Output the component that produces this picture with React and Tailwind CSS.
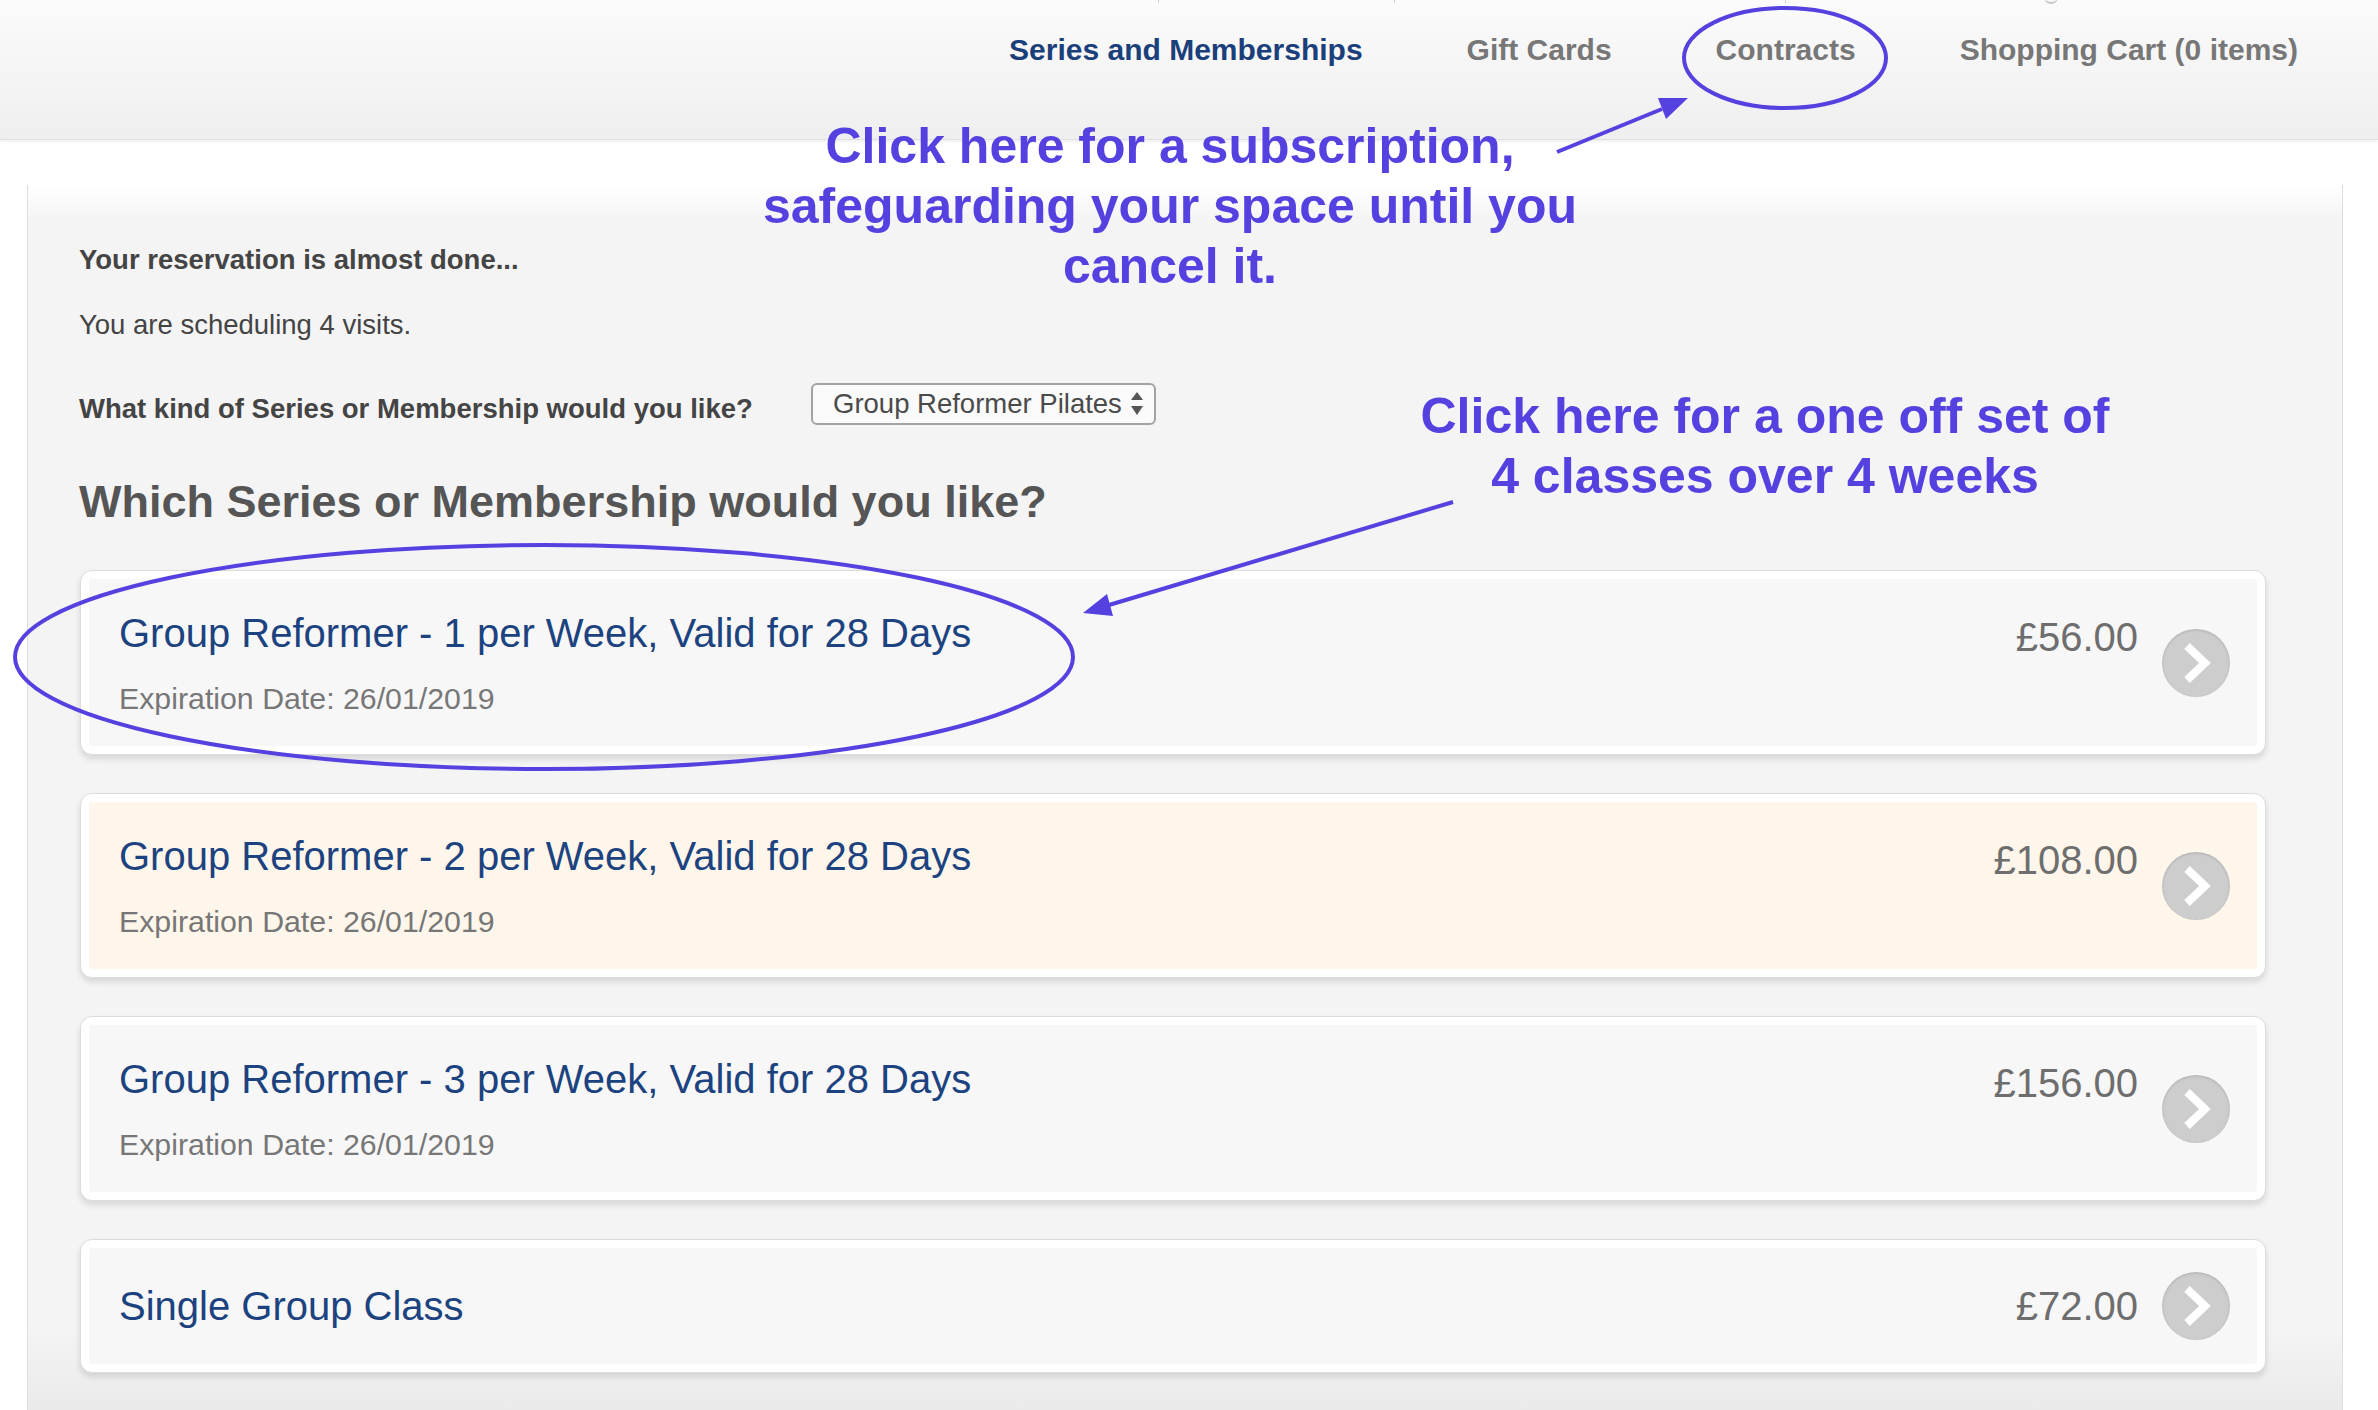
import React from "react";

const plans = [
  { title: "Group Reformer - 1 per Week, Valid for 28 Days", exp: "26/01/2019", price: "£56.00" },
  { title: "Group Reformer - 2 per Week, Valid for 28 Days", exp: "26/01/2019", price: "£108.00", hot: true },
  { title: "Group Reformer - 3 per Week, Valid for 28 Days", exp: "26/01/2019", price: "£156.00" },
  { title: "Single Group Class", price: "£72.00" },
];

const navItems = ["Series and Memberships", "Gift Cards", "Contracts", "Shopping Cart (0 items)"];

const GoButton = () => (
  <div className="flex h-[68px] w-[68px] shrink-0 items-center justify-center rounded-full bg-[#cdcdcd] shadow-[inset_0_1px_3px_rgba(0,0,0,0.15)]">
    <svg width="68" height="68" viewBox="0 0 68 68">
      <polyline points="25,17 43,34 25,51" fill="none" stroke="#ffffff" strokeWidth="8" />
    </svg>
  </div>
);

const PlanCard = ({ plan }) => (
  <div className="rounded-[12px] border border-[#dcdcdc] bg-white p-[8px] shadow-[0_4px_6px_rgba(0,0,0,0.12)]">
    <div
      className={`flex justify-between rounded-[3px] pl-[30px] pr-[27px] ${
        plan.exp ? "pt-[30px] pb-[29px]" : "items-center py-[24px]"
      } ${plan.hot ? "bg-[#fef6ea]" : "bg-[#f7f7f7]"}`}
    >
      <div>
        <div className="text-[40px] leading-[48px] text-[#1c4380]">{plan.title}</div>
        {plan.exp && (
          <div className="mt-[24px] text-[30.3px] leading-[36px] text-[#777777]">
            Expiration Date: {plan.exp}
          </div>
        )}
      </div>
      <div className="flex items-center gap-[24px]">
        <div className={`text-[40px] leading-[48px] text-[#6e6e6e] ${plan.exp ? "mt-[4px] self-start" : ""}`}>
          {plan.price}
        </div>
        <GoButton />
      </div>
    </div>
  </div>
);

const App = () => {
  return (
    <div className="relative flex h-[1410px] flex-col overflow-hidden bg-white font-['Liberation_Sans',Arial,sans-serif]">
      {/* Top bar */}
      <div className="relative h-[140px] shrink-0 border-b border-[#e0e0e0] bg-linear-to-b from-[#fbfbfb] to-[#efefef] shadow-[0_2px_3px_rgba(0,0,0,0.06)]">
        <div className="absolute left-[1158px] top-0 h-[3px] w-px bg-[#d0d0d0]"></div>
        <div className="absolute left-[1394px] top-0 h-[3px] w-px bg-[#d0d0d0]"></div>
        <div className="absolute left-[1785px] top-0 h-[3px] w-px bg-[#d0d0d0]"></div>
        <div className="absolute left-[2044px] top-[-4px] h-[8px] w-[14px] rounded-b-full border-b-2 border-[#c8c8c8]"></div>
        <nav className="flex justify-end gap-[104px] pr-[80px] pt-[33px] text-[30px] font-bold leading-[34px]">
          {navItems.map((item, i) => (
            <span key={item} className={i === 0 ? "text-[#1b3f7b]" : "text-[#777777]"}>
              {item}
            </span>
          ))}
        </nav>
      </div>

      {/* Booking panel */}
      <div className="ml-[27px] mr-[35px] mt-[45px] flex-1 border-x border-[#dddddd] bg-[linear-gradient(to_bottom,#ffffff_0px,#f4f4f4_35px,#f4f4f4_calc(100%-80px),#eaeaea_100%)] pl-[51px] pr-[76px] pt-[59px]">
        <div className="text-[27.5px] font-bold leading-[32px] text-[#444444]">Your reservation is almost done...</div>
        <div className="mt-[33px] text-[27.5px] leading-[32px] text-[#444444]">You are scheduling 4 visits.</div>

        <div className="mt-[42px] flex items-end">
          <div className="w-[732px] text-[27.5px] font-bold leading-[32px] text-[#444444]">
            What kind of Series or Membership would you like?
          </div>
          <div className="flex h-[42px] w-[345px] items-center justify-between rounded-[6px] border-2 border-[#a3a3a3] bg-[#fafafa] pl-[20px] pr-[11px]">
            <span className="text-[27.5px] leading-[32px] text-[#4a4a4a]">Group Reformer Pilates</span>
            <svg width="12" height="24" viewBox="0 0 12 24">
              <polygon points="0,8 6,0 12,8" fill="#555555" />
              <polygon points="0,14 12,14 6,23" fill="#555555" />
            </svg>
          </div>
        </div>

        <h2 className="mt-[51px] text-[45px] font-bold leading-[52px] text-[#555555]">
          Which Series or Membership would you like?
        </h2>

        <div className="mt-[42px] ml-px flex flex-col gap-[38px]">
          {plans.map((plan) => (
            <PlanCard key={plan.title} plan={plan} />
          ))}
        </div>
      </div>

      {/* Annotations */}
      <div className="absolute left-[720px] top-[116px] w-[900px] text-center text-[50px] font-bold leading-[60px] text-[#5541e0]">
        Click here for a subscription,
        <br />
        safeguarding your space until you
        <br />
        cancel it.
      </div>
      <div className="absolute left-[1315px] top-[386px] w-[900px] text-center text-[50px] font-bold leading-[60px] text-[#5541e0]">
        Click here for a one off set of
        <br />
        4 classes over 4 weeks
      </div>
      <svg className="pointer-events-none absolute left-0 top-0" width="2378" height="1410" viewBox="0 0 2378 1410">
        <ellipse cx="1785" cy="58" rx="101" ry="50" fill="none" stroke="#5541e0" strokeWidth="4" />
        <line x1="1557" y1="152" x2="1662" y2="109" stroke="#5541e0" strokeWidth="4" />
        <polygon points="1688,98 1666,119 1658,98" fill="#5541e0" />
        <ellipse cx="544" cy="657" rx="529" ry="112" fill="none" stroke="#5541e0" strokeWidth="4" />
        <line x1="1453" y1="502" x2="1109" y2="605" stroke="#5541e0" strokeWidth="4" />
        <polygon points="1083,613 1107,594 1113,616" fill="#5541e0" />
      </svg>
    </div>
  );
};

export default App;
